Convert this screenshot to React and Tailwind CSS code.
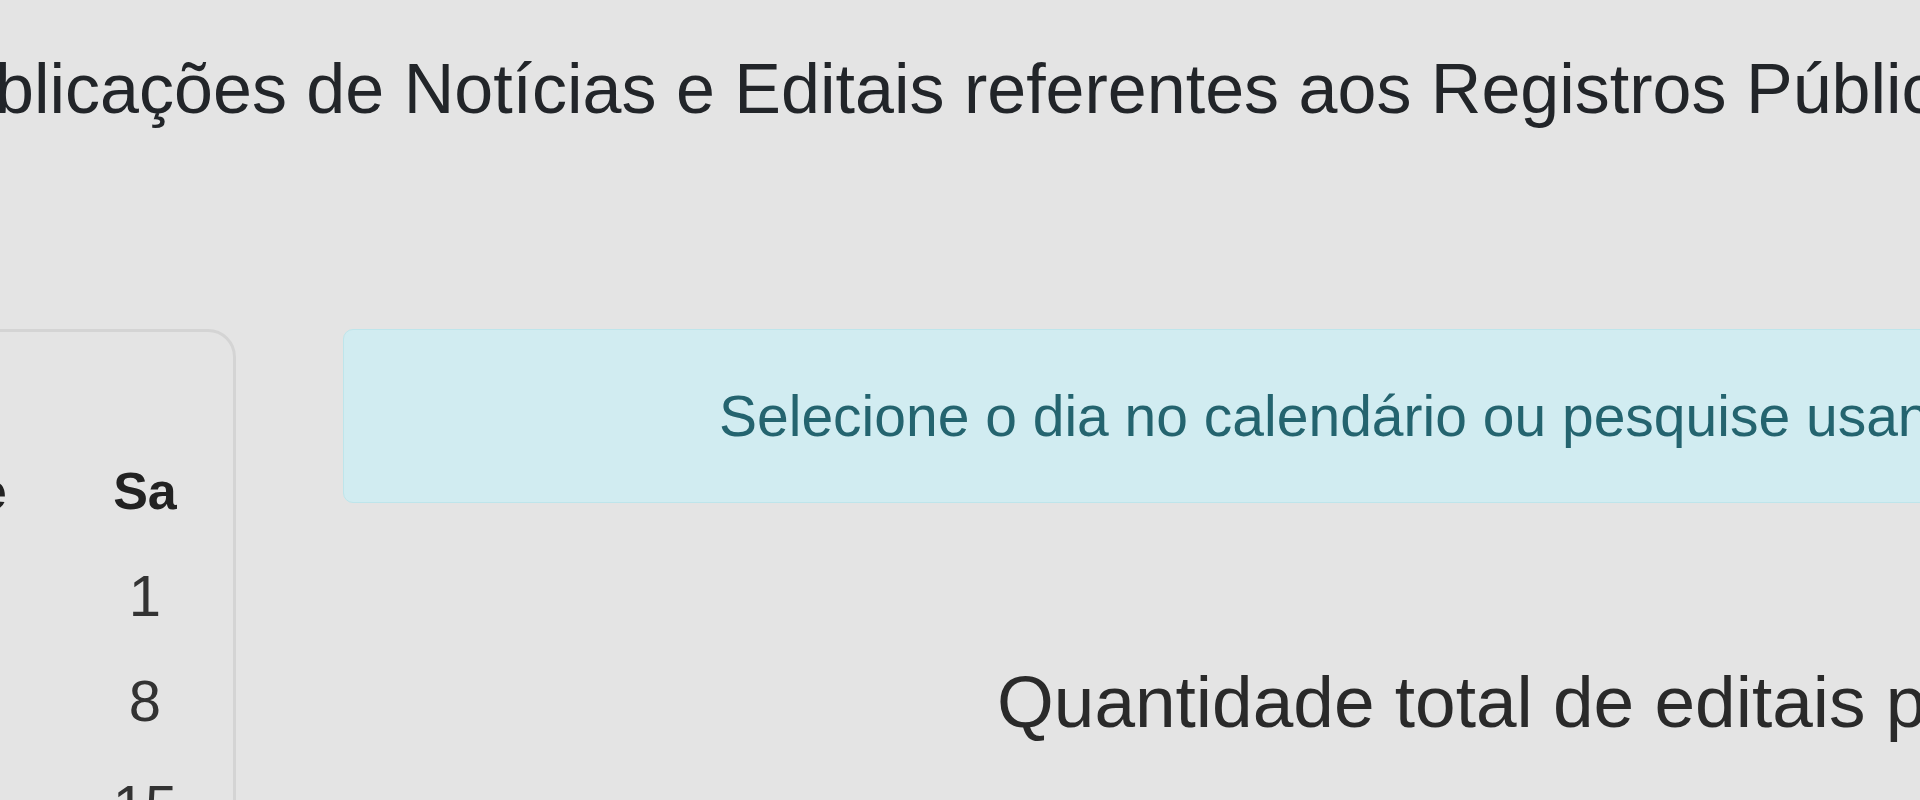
const weekDays = ['Do', 'Se', 'Te', 'Qu', 'Qu', 'Se', 'Sa'];

// julho de 2023 - o dia 1 cai no sabado
const weeks = [
  ['', '', '', '', '', '', 1],
  [2, 3, 4, 5, 6, 7, 8],
  [9, 10, 11, 12, 13, 14, 15],
  [16, 17, 18, 19, 20, 21, 22],
  [23, 24, 25, 26, 27, 28, 29],
];

const Calendar = () => {
  return (
    <div className="w-[1199px] shrink-0 -ml-[963px] rounded-[28px] border-[3px] border-[#d4d4d4] pt-[108px] pr-[3px] pb-[40px]">
      <div className="grid grid-cols-7">
        {weekDays.map((day, i) => (
          <div key={i} className="h-[103px] text-center text-[52px] leading-[103px] font-bold text-[#222]">
            {day}
          </div>
        ))}
      </div>
      {weeks.map((week, w) => (
        <div key={w} className="grid grid-cols-7">
          {week.map((d, i) => (
            <div key={i} className="h-[105px] text-center text-[58px] leading-[105px] text-[#333]">
              {d}
            </div>
          ))}
        </div>
      ))}
    </div>
  );
};

const App = () => {
  return (
    <div className="w-[1920px] h-[800px] overflow-hidden bg-[#e4e4e4] text-[#222529] font-['Liberation_Sans',Arial,sans-serif]">
      <div className="flex justify-center pt-[48px]">
        <h1 className="shrink-0 whitespace-nowrap text-[70px] leading-[83px] font-normal">
          Publicações de Notícias e Editais referentes aos Registros Públicos
        </h1>
      </div>

      <div className="mt-[198px] flex items-start">
        <Calendar />

        <div className="ml-[107px] w-[1800px] shrink-0">
          <div className="flex h-[174px] items-center rounded-[10px] border border-[#bee5eb] bg-[#d1ecf1] pl-[375px] text-[57px] leading-[68px] text-[#24646f] whitespace-nowrap">
            Selecione o dia no calendário ou pesquise usando o campo de busca
          </div>

          <h2 className="mt-[155px] pl-[654px] whitespace-nowrap text-[73px] leading-[88px] font-normal text-[#2a2a2a]">
            Quantidade total de editais publicados
          </h2>
        </div>
      </div>
    </div>
  );
};

export default App;
